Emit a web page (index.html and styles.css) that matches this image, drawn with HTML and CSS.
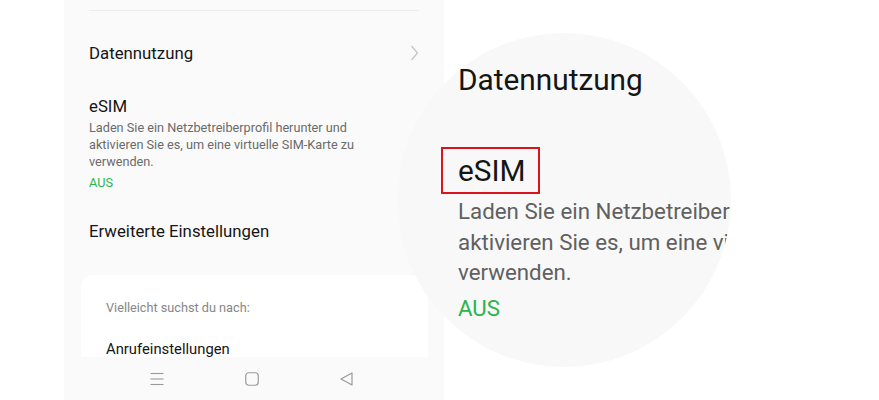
FILE: index.html
```html
<!DOCTYPE html>
<html lang="de">
<head>
<meta charset="utf-8">
<title>eSIM</title>
<link rel="stylesheet" href="styles.css">
</head>
<body>
<div class="stage">
  <div class="phone">
    <div class="content">
      <div class="divider"></div>
      <div class="row row-data">
        <span class="title">Datennutzung</span>
        <svg class="chev" width="9" height="16" viewBox="0 0 9 16"><polyline points="1.5,1 7.5,8 1.5,15" fill="none" stroke="#c2c2c2" stroke-width="1.2"/></svg>
      </div>
      <div class="row row-esim">
        <div class="esim-text">
          <div class="title">eSIM</div>
          <div class="desc">Laden Sie ein Netzbetreiberprofil herunter und<br>aktivieren Sie es, um eine virtuelle SIM-Karte zu<br>verwenden.</div>
          <div class="status">AUS</div>
        </div>
        <svg class="chev" width="9" height="16" viewBox="0 0 9 16"><polyline points="1.5,1 7.5,8 1.5,15" fill="none" stroke="#c2c2c2" stroke-width="1.2"/></svg>
      </div>
      <div class="row row-adv">
        <span class="title">Erweiterte Einstellungen</span>
        <svg class="chev" width="9" height="16" viewBox="0 0 9 16"><polyline points="1.5,1 7.5,8 1.5,15" fill="none" stroke="#c2c2c2" stroke-width="1.2"/></svg>
      </div>
      <div class="card">
        <div class="card-label">Vielleicht suchst du nach:</div>
        <div class="card-item">Anrufeinstellungen</div>
      </div>
    </div>
    <div class="navbar">
      <svg width="14" height="14" viewBox="0 0 14 14"><g stroke="#9a9a9a" stroke-width="1.1"><line x1="0.5" y1="1.5" x2="13.5" y2="1.5"/><line x1="0.5" y1="7" x2="13.5" y2="7"/><line x1="0.5" y1="12.5" x2="13.5" y2="12.5"/></g></svg>
      <svg width="14" height="14" viewBox="0 0 14 14"><rect x="0.75" y="0.75" width="12.5" height="12.5" rx="3" fill="none" stroke="#9a9a9a" stroke-width="1.2"/></svg>
      <svg width="13" height="14" viewBox="0 0 13 14"><polygon points="12,1 12,13 1,7" fill="none" stroke="#9a9a9a" stroke-width="1.2" stroke-linejoin="round"/></svg>
    </div>
  </div>
  <div class="lens">
    <div class="lens-inner">
      <div class="mag-title">Datennutzung</div>
      <div class="mag-esim">eSIM</div>
      <div class="mag-desc">Laden Sie ein Netzbetreiberprofil herunter und<br>aktivieren Sie es, um eine virtuelle SIM-Karte zu<br>verwenden.</div>
      <div class="mag-status">AUS</div>
    </div>
  </div>
</div>
</body>
</html>
```
FILE: styles.css
```css
* { box-sizing: border-box; }
html, body {
  margin: 0;
  padding: 0;
  background: #ffffff;
  font-family: Roboto, "Noto Sans", "Liberation Sans", sans-serif;
}
.stage {
  position: relative;
  width: 879px;
  height: 400px;
  overflow: hidden;
  display: flex;
}
.phone {
  margin-left: 64px;
  width: 380px;
  height: 400px;
  background: #fafafa;
  display: flex;
  flex-direction: column;
}
.content {
  height: 357px;
  overflow: hidden;
  padding-top: 10px;
}
.divider {
  margin: 0 25px;
  height: 1px;
  background: #ececec;
}
.row {
  display: flex;
  justify-content: space-between;
  align-items: center;
  padding: 0 25px 0 25px;
}
.title {
  font-size: 16.8px;
  line-height: 20px;
  color: #151515;
}
.row-data { margin-top: 32px; }
.row-esim { margin-top: 33px; align-items: center; }
.row-adv { margin-top: 30px; }
.desc {
  margin-top: 3px;
  font-size: 12.7px;
  line-height: 17px;
  color: #6a6a6a;
  white-space: nowrap;
}
.status {
  margin-top: 4px;
  font-size: 12.7px;
  line-height: 17px;
  color: #2bb34d;
}
.row-esim .chev { margin-top: -6px; }
.card {
  margin: 34px 16px 0 17px;
  background: #ffffff;
  border-radius: 12px;
  padding: 24px 25px 30px;
  height: 120px;
}
.card-label {
  font-size: 12.7px;
  line-height: 17px;
  color: #868686;
}
.card-item {
  margin-top: 23px;
  font-size: 14.8px;
  line-height: 20px;
  color: #151515;
}
.navbar {
  flex: 1;
  display: flex;
  justify-content: space-between;
  align-items: center;
  padding: 0 91px 0 86px;
  padding-top: 1px;
}
.lens {
  position: absolute;
  left: 397px;
  top: 33px;
  width: 334px;
  height: 334px;
  border-radius: 50%;
  background: #f8f8f8;
  overflow: hidden;
}
.lens-inner {
  padding: 33px 0 0 61px;
  white-space: nowrap;
}
.mag-title {
  font-size: 29.8px;
  line-height: 28px;
  color: #151515;
}
.mag-esim {
  display: inline-block;
  margin: 53px 0 0 -17px;
  padding: 7.5px 12px 7.5px 15px;
  border: 2px solid #d9141c;
  font-size: 29.8px;
  line-height: 28px;
  color: #151515;
}
.mag-desc {
  margin-top: 2px;
  font-size: 22.3px;
  line-height: 30.5px;
  color: #606060;
}
.mag-status {
  margin-top: 5px;
  font-size: 22.3px;
  line-height: 30px;
  color: #2bb34d;
}
```
